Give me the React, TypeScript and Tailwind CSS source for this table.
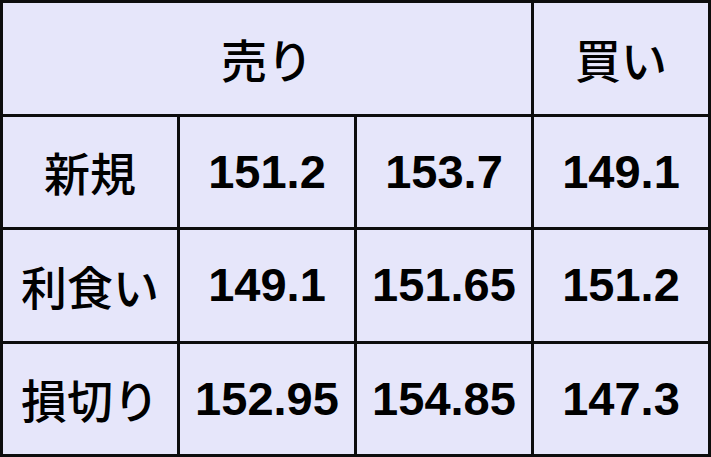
import React from 'react';

const rows = [
  { label: '新規', values: ['151.2', '153.7', '149.1'] },
  { label: '利食い', values: ['149.1', '151.65', '151.2'] },
  { label: '損切り', values: ['152.95', '154.85', '147.3'] },
];

const jp = "font-['Noto_Sans_CJK_JP',sans-serif] text-[46px] font-medium";
const num = "font-['Liberation_Sans',Arial,sans-serif] text-[47px] font-bold";

export default function App() {
  return (
    <div className="grid h-[457px] w-[711px] grid-cols-4 grid-rows-4 gap-[3px] bg-[#0d0d0d] p-[3px] text-black">
      <div className={`col-span-3 flex items-center justify-center bg-[#e6e6fa] ${jp}`}>売り</div>
      <div className={`flex items-center justify-center bg-[#e6e6fa] ${jp}`}>買い</div>
      {rows.map((r) => (
        <React.Fragment key={r.label}>
          <div className={`flex items-center justify-center bg-[#e6e6fa] ${jp}`}>{r.label}</div>
          {r.values.map((v, i) => (
            <div key={i} className={`flex items-center justify-center bg-[#e6e6fa] ${num}`}>
              {v}
            </div>
          ))}
        </React.Fragment>
      ))}
    </div>
  );
}
